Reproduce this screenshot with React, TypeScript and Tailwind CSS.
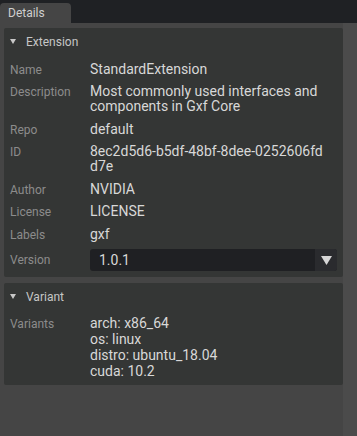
import React from 'react';

const ROWS: { label: string; lines: string[] }[] = [
  { label: 'Name', lines: ['StandardExtension'] },
  { label: 'Description', lines: ['Most commonly used interfaces and', 'components in Gxf Core'] },
  { label: 'Repo', lines: ['default'] },
  { label: 'ID', lines: ['8ec2d5d6-b5df-48bf-8dee-0252606fd', 'd7e'] },
  { label: 'Author', lines: ['NVIDIA'] },
  { label: 'License', lines: ['LICENSE'] },
  { label: 'Labels', lines: ['gxf'] },
];

const VARIANTS = ['arch: x86_64', 'os: linux', 'distro: ubuntu_18.04', 'cuda: 10.2'];

const Caret = () => (
  <svg width="6" height="5" viewBox="0 0 6 5" className="shrink-0">
    <polygon points="0,0 6,0 3,5" fill="#c8c8c8" />
  </svg>
);

const SectionHeader = ({ title }: { title: string }) => (
  <div className="h-[27px] flex items-center gap-[10px] pl-[6px] text-[12px] text-[#c6c6c6]">
    <Caret />
    <span>{title}</span>
  </div>
);

export default function App() {
  return (
    <div
      className="w-[357px] h-[436px] flex flex-col bg-[#454545] overflow-hidden"
      style={{ fontFamily: 'Roboto, "Noto Sans", sans-serif' }}
    >
      {/* Tab strip */}
      <div className="h-[23px] bg-[#1f2124] flex items-end shrink-0">
        <div className="h-[20px] w-[71px] bg-[#454545] rounded-t-[4px] flex items-center pl-[8px] text-[12px] text-[#cfcfcf]">
          Details
        </div>
      </div>

      <div className="flex flex-1 min-h-0">
        <div className="flex-1 pl-[4px] pt-[5px] flex flex-col gap-[6px]">
          {/* Extension */}
          <div className="bg-[#343635] rounded-[2px] pb-[6px]">
            <SectionHeader title="Extension" />
            <div className="pt-[3px]">
              {ROWS.map((row) => (
                <div key={row.label} className="flex items-start py-[3.75px]">
                  <div className="w-[86px] pl-[6px] pt-[1px] leading-[14px] text-[12px] text-[#8c8c8c] shrink-0">
                    {row.label}
                  </div>
                  <div className="text-[14px] leading-[15px] text-[#d8d8d8]">
                    {row.lines.map((l) => (
                      <div key={l}>{l}</div>
                    ))}
                  </div>
                </div>
              ))}
              <div className="flex items-center pt-[3.5px]">
                <div className="w-[86px] pl-[6px] text-[12px] text-[#8c8c8c] shrink-0">Version</div>
                <div className="w-[247px] h-[22px] flex rounded-[3px] overflow-hidden bg-[#1f2023]">
                  <div className="flex-1 flex items-center pl-[9px] text-[14px] text-[#d8d8d8]">1.0.1</div>
                  <div className="w-[22px] bg-[#2a2b2e] flex items-center justify-center">
                    <svg width="11" height="9" viewBox="0 0 11 9">
                      <polygon points="0,0 11,0 5.5,9" fill="#d6d6d6" />
                    </svg>
                  </div>
                </div>
              </div>
            </div>
          </div>

          {/* Variant */}
          <div className="bg-[#343635] rounded-[2px] pb-[6px]">
            <SectionHeader title="Variant" />
            <div className="pt-[5px] flex items-start">
              <div className="w-[86px] pl-[6px] pt-[2px] leading-[14px] text-[12px] text-[#8c8c8c] shrink-0">
                Variants
              </div>
              <div className="text-[14px] leading-[16px] text-[#d8d8d8]">
                {VARIANTS.map((v) => (
                  <div key={v}>{v}</div>
                ))}
              </div>
            </div>
          </div>
        </div>
        {/* scrollbar track */}
        <div className="w-[14px] bg-[#4b4b4b] shrink-0" />
      </div>
    </div>
  );
}
